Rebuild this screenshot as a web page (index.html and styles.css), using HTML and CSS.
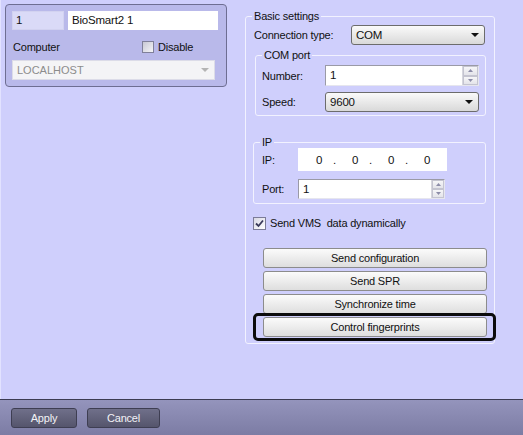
FILE: index.html
```html
<!DOCTYPE html>
<html>
<head>
<meta charset="utf-8">
<link rel="stylesheet" href="styles.css">
</head>
<body>
<div class="window">
  <div class="main">
    <div class="device-panel">
      <div class="row">
        <div class="field field-id">1</div>
        <div class="field field-name">BioSmart2 1</div>
      </div>
      <div class="row row-computer">
        <span class="label">Computer</span>
        <label class="check check-disable"><span class="box"></span>Disable</label>
      </div>
      <div class="select select-disabled">
        <span>LOCALHOST</span>
        <svg class="arrow" width="8" height="4" viewBox="0 0 8 4"><path d="M0 0H8L4 4Z" fill="#b4b4b4"/></svg>
      </div>
    </div>

    <fieldset class="group group-basic">
      <legend>Basic settings</legend>
      <div class="row row-conn">
        <span class="label label-conn">Connection type:</span>
        <div class="select select-conn">
          <span>COM</span>
          <svg class="arrow" width="8" height="4" viewBox="0 0 8 4"><path d="M0 0H8L4 4Z" fill="#111"/></svg>
        </div>
      </div>

      <fieldset class="group group-com">
        <legend>COM port</legend>
        <div class="row">
          <span class="label label-com">Number:</span>
          <div class="spin spin-number">
            <span class="spin-value">1</span>
            <span class="spin-btns">
              <span class="spin-btn"><svg width="5" height="3" viewBox="0 0 5 3"><path d="M0 3H5L2.5 0Z" fill="#8c8ca8"/></svg></span>
              <span class="spin-btn"><svg width="5" height="3" viewBox="0 0 5 3"><path d="M0 0H5L2.5 3Z" fill="#8c8ca8"/></svg></span>
            </span>
          </div>
        </div>
        <div class="row row-speed">
          <span class="label label-com">Speed:</span>
          <div class="select select-speed">
            <span>9600</span>
            <svg class="arrow" width="8" height="4" viewBox="0 0 8 4"><path d="M0 0H8L4 4Z" fill="#111"/></svg>
          </div>
        </div>
      </fieldset>

      <fieldset class="group group-ip">
        <legend>IP</legend>
        <div class="row">
          <span class="label label-ip">IP:</span>
          <div class="ip-field">
            <span class="oct">0</span><span class="dot">.</span><span class="oct">0</span><span class="dot">.</span><span class="oct">0</span><span class="dot">.</span><span class="oct">0</span>
          </div>
        </div>
        <div class="row row-port">
          <span class="label label-ip">Port:</span>
          <div class="spin spin-port">
            <span class="spin-value">1</span>
            <span class="spin-btns">
              <span class="spin-btn"><svg width="5" height="3" viewBox="0 0 5 3"><path d="M0 3H5L2.5 0Z" fill="#8c8ca8"/></svg></span>
              <span class="spin-btn"><svg width="5" height="3" viewBox="0 0 5 3"><path d="M0 0H5L2.5 3Z" fill="#8c8ca8"/></svg></span>
            </span>
          </div>
        </div>
      </fieldset>

      <label class="check check-vms">
        <span class="box checked"><svg width="9" height="9" viewBox="0 0 9 9"><path d="M1 4.5L3.5 7L8 1.5" fill="none" stroke="#3a3a5a" stroke-width="1.8"/></svg></span>Send VMS&nbsp; data dynamically
      </label>

      <div class="actions">
        <button class="btn">Send configuration</button>
        <button class="btn">Send SPR</button>
        <button class="btn">Synchronize time</button>
        <div class="highlight-wrap">
          <button class="btn">Control fingerprints</button>
          <span class="highlight"></span>
        </div>
      </div>
    </fieldset>
  </div>

  <div class="footer">
    <button class="dark-btn btn-apply">Apply</button>
    <button class="dark-btn btn-cancel">Cancel</button>
  </div>
</div>
</body>
</html>
```

FILE: styles.css
```css
* { box-sizing: border-box; }
html, body { margin: 0; padding: 0; }
body {
  font-family: "Liberation Sans", Arial, sans-serif;
  font-size: 11px;
  letter-spacing: -0.2px;
  color: #111;
}
.window {
  width: 523px;
  height: 435px;
  display: flex;
  flex-direction: column;
  background: #cfcffc;
  overflow: hidden;
}
.main {
  height: 399px;
  display: flex;
  align-items: flex-start;
  padding: 4px 0 0 5px;
  border-left: 1px solid #e2e2ff;
}
.row { display: flex; align-items: center; }
.label { white-space: nowrap; }

/* left device panel */
.device-panel {
  width: 222px;
  height: 83px;
  margin-left: -1px;
  border: 1px solid #6e6e92;
  border-radius: 4px;
  background: #b9b9ea;
  padding: 6px 8px 0 6px;
}
.field {
  height: 19px;
  line-height: 19px;
  padding-left: 3px;
  font-size: 11.5px;
}
.field-id {
  width: 52px;
  background: #dadaf7;
  border: 1px solid #d2d2f0;
  line-height: 17px;
}
.field-name {
  width: 150px;
  margin-left: 4px;
  background: #fff;
  padding-left: 4px;
}
.row-computer {
  height: 12px;
  margin-top: 11px;
}
.row-computer .label { width: 130px; padding-left: 1px; }
.check { display: flex; align-items: center; white-space: nowrap; }
.check .box {
  width: 12px;
  height: 12px;
  border: 1px solid #80809a;
  background: linear-gradient(135deg, #c8c8d4, #f4f4f8);
  margin-right: 4px;
  display: flex;
  align-items: center;
  justify-content: center;
}
.select {
  display: flex;
  align-items: center;
  justify-content: space-between;
  height: 20px;
  padding: 0 5px 0 4px;
}
.select-disabled {
  margin-top: 7px;
  width: 203px;
  background: #f4f4f6;
  border: 1px solid #dcdce8;
  color: #8c8c8c;
  letter-spacing: 0;
}

/* group boxes */
.group {
  margin: 0;
  border: 1px solid #f2f2ff;
  border-radius: 3px;
  min-width: 0;
}
.group legend {
  padding: 0 2px;
  margin-left: -2px;
  line-height: 12px;
}
.group-basic {
  width: 250px;
  height: 334px;
  margin-top: 6px;
  margin-left: 18px;
  padding: 3px 8px 0 7px;
}
.group-basic > legend { margin-left: -1px; }
.label-conn { width: 98px; padding-left: 1px; }
.select-conn {
  width: 134px;
  background: linear-gradient(#fafafa, #d9d9d9);
  border: 1px solid #6c6c6c;
  border-radius: 3px;
  font-size: 11.5px;
}

.group-com {
  margin: 4px 0 0 2px;
  height: 67px;
  padding: 4px 6px 0 6px;
}
.group-com legend { margin-left: 0; }
.label-com { width: 63px; }
.spin {
  display: flex;
  height: 21px;
  background: #fff;
  border: 1px solid #9a9aa6;
  border-right-color: #e6e6ee;
  border-bottom-color: #e6e6ee;
}
.spin-number { width: 154px; }
.spin-value { flex: 1; padding-left: 4px; line-height: 19px; font-size: 11.5px; }
.spin-btns {
  width: 16px;
  display: flex;
  flex-direction: column;
  border-left: 1px solid #d6d6de;
}
.spin-btn {
  flex: 1;
  display: flex;
  align-items: center;
  justify-content: center;
  background: linear-gradient(#f6f6f8, #e4e4ea);
  border: 1px solid #c4c4d0;
}
.row-speed { margin-top: 6px; }
.select-speed {
  width: 154px;
  background: linear-gradient(#fafafa, #d9d9d9);
  border: 1px solid #6c6c6c;
  border-radius: 3px;
  font-size: 11.5px;
}

.group-ip {
  margin: 20px 0 0 0;
  width: 233px;
  height: 68px;
  padding: 0 6px 0 8px;
}
.group-ip legend { margin-left: -2px; }
.label-ip { width: 36px; }
.ip-field {
  width: 149px;
  height: 23px;
  background: #fff;
  display: flex;
  align-items: center;
  padding-left: 18px;
  font-size: 11.5px;
}
.ip-field .oct { width: 10px; }
.ip-field .dot { width: 26px; padding-left: 7px; }
.row-port { margin-top: 8px; }
.spin-port { width: 147px; height: 20px; }
.spin-port .spin-btns { width: 13px; }
.spin-port .spin-value { line-height: 18px; }

.check-vms {
  margin-top: 12px;
  height: 14px;
}
.check-vms .box {
  width: 13px;
  height: 13px;
  border-color: #7c7c98;
  background: linear-gradient(135deg, #d8d8e4, #ffffff);
}

.actions {
  margin: 18px -1px 0 10px;
  display: flex;
  flex-direction: column;
  gap: 3px;
}
.btn {
  display: block;
  width: 100%;
  height: 20px;
  padding: 0;
  font-family: inherit;
  font-size: 11px;
  letter-spacing: -0.2px;
  color: #111;
  background: linear-gradient(#fbfbfb, #dedede);
  border: 1px solid #8c8c8c;
  border-radius: 3px;
}
.highlight-wrap { position: relative; }
.highlight {
  position: absolute;
  left: -10px;
  right: -9px;
  top: -4px;
  bottom: -4px;
  border: 3px solid #0c0c0c;
  border-radius: 5px;
  pointer-events: none;
}

/* footer */
.footer {
  flex: 1;
  border-top: 1px solid #3c3c52;
  background: linear-gradient(#9494bc, #7c7ca4);
  display: flex;
  align-items: flex-start;
  gap: 10px;
  padding: 8px 0 0 11px;
}
.dark-btn {
  height: 20px;
  padding: 0;
  font-family: inherit;
  font-size: 11px;
  letter-spacing: -0.2px;
  color: #f2f2f6;
  background: linear-gradient(#70708a, #55556c);
  border: 1px solid #3e3e52;
  border-radius: 3px;
}
.btn-apply { width: 66px; }
.btn-cancel { width: 73px; }
```
